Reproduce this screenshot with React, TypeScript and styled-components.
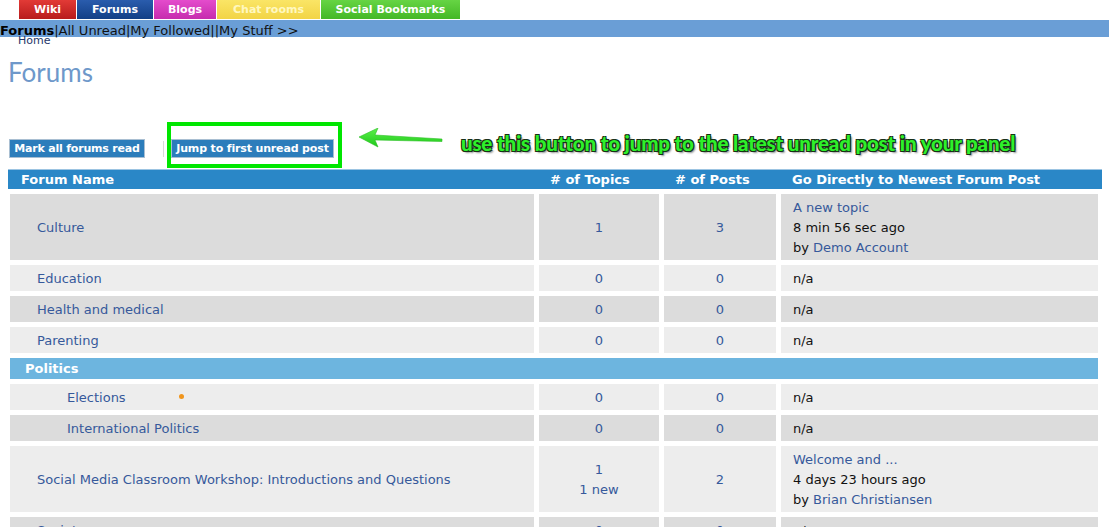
import React from 'react';
import styled, { createGlobalStyle } from 'styled-components';

const GlobalStyle = createGlobalStyle`
  html, body { margin: 0; padding: 0; background: #fff; }
  body { font-family: "DejaVu Sans", Verdana, sans-serif; color: #000; }
`;

const TabBar = styled.nav`
  display: flex;
  gap: 1px;
  padding-left: 19px;
  height: 19px;
`;

const Tab = styled.a<{ $w: number; $top: string; $bottom: string; $color?: string }>`
  width: ${(p) => p.$w}px;
  height: 19px;
  display: flex;
  align-items: center;
  justify-content: center;
  background: linear-gradient(${(p) => p.$top}, ${(p) => p.$bottom});
  color: ${(p) => p.$color ?? '#fff'};
  font-weight: bold;
  font-size: 11px;
  text-decoration: none;
`;

const NavBar = styled.div`
  margin-top: 1px;
  height: 17px;
  line-height: 21px;
  background: #6a9ed6;
  font-size: 13px;
  color: #111;
  white-space: nowrap;
`;

const NavStrong = styled.b`
  color: #000;
`;

const Breadcrumb = styled.div`
  margin-top: -3px;
  padding-left: 18px;
  font-size: 11px;
  line-height: 13px;
  color: #26386a;
  position: relative;
`;

const Content = styled.main`
  padding: 0 9px 0 8px;
`;

const Title = styled.h1`
  margin: 10px 0 0;
  font-family: Lato, "Open Sans", sans-serif;
  font-weight: 400;
  font-size: 26px;
  line-height: 30px;
  color: #6e98ca;
`;

const ActionRow = styled.div`
  margin-top: 35px;
  display: flex;
  align-items: flex-start;
  height: 46px;
`;

const Button = styled.button`
  height: 19px;
  padding: 0 4px;
  background: #2c7dbb;
  border: 1px solid #a9bfd2;
  color: #fff;
  font-family: "DejaVu Sans", Verdana, sans-serif;
  font-weight: bold;
  font-size: 11px;
  line-height: 17px;
  white-space: nowrap;
`;

const MarkButton = styled(Button)`
  margin-top: 17px;
  margin-left: 1px;
  width: 136px;
  letter-spacing: -0.2px;
`;

const Divider = styled.span`
  width: 1px;
  height: 16px;
  margin: 19px 3px 0 18px;
  background: #d8d8d8;
`;

const Highlight = styled.div`
  border: 4px solid #00e600;
  padding: 13px 4px 6px 0;
  display: flex;
`;

const JumpButton = styled(Button)`
  width: 163px;
  letter-spacing: -0.15px;
`;

const Arrow = styled.svg`
  margin: 6px 0 0 17px;
  flex: none;
`;

const Annotation = styled.span`
  margin: 9px 0 0 18px;
  font-family: Lato, "DejaVu Sans", sans-serif;
  font-weight: 900;
  font-size: 20.5px;
  line-height: 24px;
  letter-spacing: -0.16px;
  color: #2ef02a;
  white-space: nowrap;
  text-shadow: -1px -1px 0 #173017, 1px -1px 0 #173017, -1px 1px 0 #173017, 1px 1px 0 #173017,
    2px 2px 2px rgba(0, 0, 0, 0.45);
`;

const Table = styled.section`
  margin-top: 1px;
  width: 1092px;
`;

const Grid = styled.div`
  display: grid;
  grid-template-columns: 524px 120px 112px 1fr;
  column-gap: 5px;
`;

const HeaderRow = styled(Grid)`
  height: 20px;
  background: #2a87c7;
  border-top: 1px solid #9cc4e2;
  box-sizing: border-box;
  padding: 0 2px;
  margin-right: -2px;
`;

const HeadCell = styled.div`
  padding-left: 11px;
  color: #fff;
  font-weight: bold;
  font-size: 13px;
  line-height: 19px;
  white-space: nowrap;
`;

const Body = styled.div`
  margin-top: 5px;
  display: flex;
  flex-direction: column;
  gap: 5px;
  padding: 0 2px;
`;

const Row = styled(Grid)<{ $dark: boolean }>`
  & > div {
    background: ${(p) => (p.$dark ? '#dcdcdc' : '#ededed')};
  }
`;

const Cell = styled.div`
  padding: 4px 0 2px;
  font-size: 13px;
  line-height: 20px;
  display: flex;
  flex-direction: column;
  justify-content: center;
`;

const NameCell = styled(Cell)<{ $sub: boolean }>`
  flex-direction: row;
  align-items: center;
  justify-content: flex-start;
  padding-left: ${(p) => (p.$sub ? 57 : 27)}px;
`;

const CountCell = styled(Cell)`
  align-items: center;
  color: #36599b;
`;

const LastCell = styled(Cell)`
  padding-left: 12px;
  color: #111;
`;

const Link = styled.a`
  color: #36599b;
  text-decoration: none;
`;

const NewDot = styled.span`
  width: 5px;
  height: 5px;
  border-radius: 50%;
  background: #f0951c;
  margin: -4px 0 0 53px;
`;

const CategoryRow = styled.div`
  height: 21px;
  line-height: 22px;
  background: #6db5df;
  color: #fff;
  font-weight: bold;
  font-size: 13px;
  padding-left: 15px;
`;

type Forum = {
  name: string;
  sub?: boolean;
  dot?: boolean;
  topics: string[];
  posts: string;
  last?: { title: string; ago: string; by: string };
  dark: boolean;
};

type Item = { kind: 'forum'; forum: Forum } | { kind: 'category'; name: string };

const items: Item[] = [
  {
    kind: 'forum',
    forum: {
      name: 'Culture',
      topics: ['1'],
      posts: '3',
      last: { title: 'A new topic', ago: '8 min 56 sec ago', by: 'Demo Account' },
      dark: true,
    },
  },
  { kind: 'forum', forum: { name: 'Education', topics: ['0'], posts: '0', dark: false } },
  { kind: 'forum', forum: { name: 'Health and medical', topics: ['0'], posts: '0', dark: true } },
  { kind: 'forum', forum: { name: 'Parenting', topics: ['0'], posts: '0', dark: false } },
  { kind: 'category', name: 'Politics' },
  { kind: 'forum', forum: { name: 'Elections', sub: true, dot: true, topics: ['0'], posts: '0', dark: false } },
  { kind: 'forum', forum: { name: 'International Politics', sub: true, topics: ['0'], posts: '0', dark: true } },
  {
    kind: 'forum',
    forum: {
      name: 'Social Media Classroom Workshop: Introductions and Questions',
      topics: ['1', '1 new'],
      posts: '2',
      last: { title: 'Welcome and ...', ago: '4 days 23 hours ago', by: 'Brian Christiansen' },
      dark: false,
    },
  },
  { kind: 'forum', forum: { name: 'Society', topics: ['0'], posts: '0', dark: true } },
];

const tabs = [
  { label: 'Wiki', w: 57, top: '#e23a36', bottom: '#b81c1c' },
  { label: 'Forums', w: 76, top: '#2a5cad', bottom: '#123f86' },
  { label: 'Blogs', w: 62, top: '#e44ccc', bottom: '#c62cae' },
  { label: 'Chat rooms', w: 103, top: '#fae566', bottom: '#f2d445', color: '#fff8c0' },
  { label: 'Social Bookmarks', w: 139, top: '#66d444', bottom: '#44b826' },
];

export default function App() {
  return (
    <>
      <GlobalStyle />
      <TabBar>
        {tabs.map((t) => (
          <Tab key={t.label} $w={t.w} $top={t.top} $bottom={t.bottom} $color={t.color}>
            {t.label}
          </Tab>
        ))}
      </TabBar>
      <NavBar>
        <NavStrong>Forums</NavStrong>|All Unread|My Followed||My Stuff &gt;&gt;
      </NavBar>
      <Breadcrumb>Home</Breadcrumb>
      <Content>
        <Title>Forums</Title>
        <ActionRow>
          <MarkButton>Mark all forums read</MarkButton>
          <Divider />
          <Highlight>
            <JumpButton>Jump to first unread post</JumpButton>
          </Highlight>
          <Arrow width="84" height="20" viewBox="0 0 84 20">
            <defs>
              <linearGradient id="ag" x1="0" y1="0" x2="0" y2="1">
                <stop offset="0" stopColor="#5cf04a" />
                <stop offset="1" stopColor="#1ec81a" />
              </linearGradient>
            </defs>
            <polygon
              points="0,9 19,0 16,7 83,11 83,13.5 16,12 19,19"
              fill="url(#ag)"
              stroke="#2bbf25"
              strokeWidth="0.6"
              strokeLinejoin="round"
            />
          </Arrow>
          <Annotation>use this button to jump to the latest unread post in your panel</Annotation>
        </ActionRow>
        <Table>
          <HeaderRow>
            <HeadCell>Forum Name</HeadCell>
            <HeadCell># of Topics</HeadCell>
            <HeadCell># of Posts</HeadCell>
            <HeadCell>Go Directly to Newest Forum Post</HeadCell>
          </HeaderRow>
          <Body>
            {items.map((it, i) =>
              it.kind === 'category' ? (
                <CategoryRow key={i}>{it.name}</CategoryRow>
              ) : (
                <Row key={i} $dark={it.forum.dark}>
                  <NameCell $sub={!!it.forum.sub}>
                    <Link href="#">{it.forum.name}</Link>
                    {it.forum.dot && <NewDot />}
                  </NameCell>
                  <CountCell>
                    {it.forum.topics.map((t) => (
                      <Link key={t} href="#">
                        {t}
                      </Link>
                    ))}
                  </CountCell>
                  <CountCell>
                    <Link href="#">{it.forum.posts}</Link>
                  </CountCell>
                  <LastCell>
                    {it.forum.last ? (
                      <>
                        <Link href="#">{it.forum.last.title}</Link>
                        <span>{it.forum.last.ago}</span>
                        <span>
                          by <Link href="#">{it.forum.last.by}</Link>
                        </span>
                      </>
                    ) : (
                      <span>n/a</span>
                    )}
                  </LastCell>
                </Row>
              )
            )}
          </Body>
        </Table>
      </Content>
    </>
  );
}
